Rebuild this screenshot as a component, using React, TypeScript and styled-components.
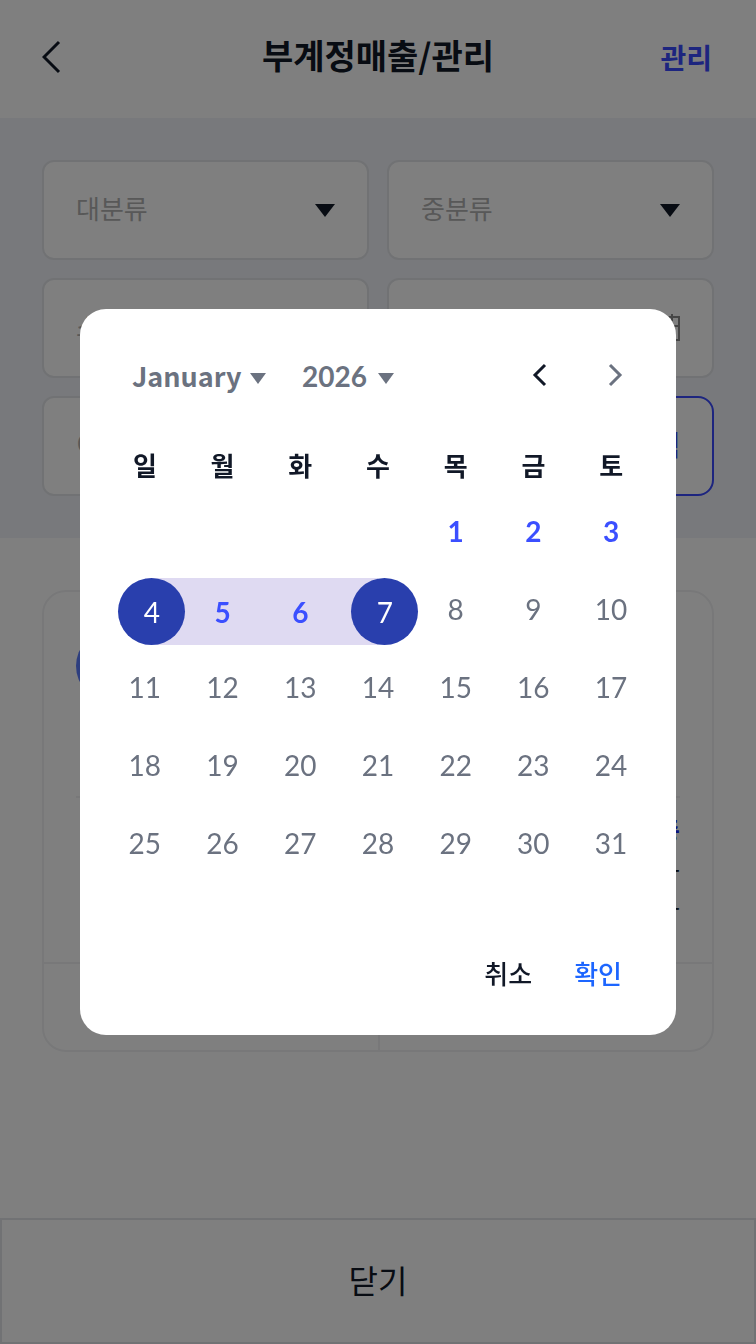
import React from "react";
import styled, { createGlobalStyle, css } from "styled-components";

const GlobalStyle = createGlobalStyle`
  * { box-sizing: border-box; }
  body {
    margin: 0;
    background: #ffffff;
    color: #111827;
    font-family: "Noto Sans CJK KR", sans-serif;
  }
  button, select, input {
    margin: 0;
    padding: 0;
    border: 0;
    background: none;
    color: inherit;
    font: inherit;
    letter-spacing: inherit;
  }
  svg { flex: none; }
`;

const Page = styled.div`
  display: flex;
  flex-direction: column;
  min-height: 100vh;
`;

const Header = styled.header`
  display: grid;
  grid-template-columns: 1fr auto 1fr;
  align-items: center;
  height: 118px;
  padding: 0 42px 4px;
`;

const Title = styled.h1`
  margin: 0;
  padding-bottom: 4px;
  font-size: 34px;
  line-height: 48px;
  font-weight: 700;
`;

const BackButton = styled.button`
  display: flex;
  justify-self: start;
`;

const ManageButton = styled.button`
  justify-self: end;
  padding-right: 2px;
  color: #3b4bff;
  font-size: 28px;
  line-height: 40px;
  font-weight: 700;
`;

const Filters = styled.section`
  display: grid;
  grid-template-columns: repeat(2, minmax(0, 1fr));
  gap: 18px;
  padding: 42px;
  background: #f0f2f8;
`;

const fieldBox = css`
  height: 100px;
  border: 2px solid #e2e4e8;
  border-radius: 12px;
  background: #ffffff;
`;

const SelectField = styled.label`
  ${fieldBox}
  display: flex;
  align-items: center;
  padding: 0 32px;
`;

const Select = styled.select`
  flex: 1;
  min-width: 0;
  padding-bottom: 4px;
  appearance: none;
  color: #b0b0b0;
  font-size: 26px;
  line-height: 40px;
`;

const TextInput = styled.input`
  flex: 1;
  min-width: 0;
  padding-bottom: 4px;
  font-size: 26px;
  line-height: 40px;
  color: #111827;
  &::placeholder { color: #b0b0b0; opacity: 1; }
`;

const SearchButton = styled.button`
  ${fieldBox}
  padding: 0 32px 4px;
  border-color: #3b4bff;
  border-radius: 16px;
  color: #3b4bff;
  font-size: 28px;
  font-weight: 500;
  text-align: right;
`;

const Main = styled.main`
  flex: 1;
  padding: 52px 42px 0;
`;

const Card = styled.article`
  border: 2px solid #f0f1f3;
  border-radius: 24px;
`;

const CardBody = styled.div`
  height: 372px;
  padding: 0 32px;
  border-bottom: 2px solid #f0f1f3;
`;

const CardHead = styled.div`
  display: flex;
  align-items: center;
  height: 206px;
  padding-bottom: 56px;
  border-bottom: 2px solid #f0f1f3;
`;

const Avatar = styled.div`
  width: 72px;
  height: 72px;
  border-radius: 50%;
  background: #5b7cff;
`;

const Amount = styled.div<{ $accent?: boolean }>`
  height: 38px;
  color: ${(p) => (p.$accent ? "#1226ff" : "#111827")};
  font-size: 26px;
  line-height: 38px;
  font-weight: ${(p) => (p.$accent ? 700 : 400)};
  text-align: right;
`;

const Amounts = styled.div`
  padding-top: 12px;
`;

const CardActions = styled.div`
  display: grid;
  grid-template-columns: 1fr 1fr;
  height: 86px;
`;

const CardAction = styled.div`
  & + & { border-left: 2px solid #f0f1f3; }
`;

const CloseButton = styled.button`
  height: 126px;
  padding-bottom: 4px;
  border: 2px solid #e2e4e8;
  font-size: 32px;
  line-height: 48px;
`;

const Overlay = styled.div`
  position: fixed;
  inset: 0;
  display: flex;
  align-items: center;
  justify-content: center;
  padding: 0 80px;
  background: rgba(0, 0, 0, 0.5);
`;

const Dialog = styled.div`
  display: flex;
  flex-direction: column;
  flex: 1;
  max-width: 596px;
  height: 726px;
  padding: 42px 26px 0;
  border-radius: 26px;
  background: #ffffff;
`;

const DialogHead = styled.div`
  display: flex;
  align-items: center;
  height: 50px;
  padding: 0 26px;
  color: #6b7280;
`;

const Picker = styled.label<{ $width: number }>`
  display: flex;
  align-items: center;
  width: ${(p) => p.$width}px;
  margin-right: 36px;

  svg { margin-top: 4px; }
`;

const PickerSelect = styled.select<{ $numeric?: boolean }>`
  flex: 1;
  min-width: 0;
  appearance: none;
  font-family: ${(p) => (p.$numeric ? "Lato" : '"Noto Sans CJK KR"')}, sans-serif;
  font-size: ${(p) => (p.$numeric ? 28 : 27)}px;
  line-height: 40px;
  font-weight: 700;
`;

const Steppers = styled.div`
  display: flex;
  gap: 60px;
  margin-left: auto;
  padding-bottom: 2px;
`;

const StepButton = styled.button<{ $muted?: boolean }>`
  display: flex;
  color: ${(p) => (p.$muted ? "#6b7280" : "#111827")};
`;

const Calendar = styled.table`
  width: 100%;
  margin-top: 33px;
  table-layout: fixed;
  border-collapse: collapse;
`;

const Weekday = styled.th`
  height: 62px;
  padding: 0;
  font-size: 26px;
  line-height: 40px;
  font-weight: 700;
`;

type DayKind = "plain" | "active" | "range" | "start" | "end";

const dayBand = {
  plain: "none",
  active: "none",
  range: "#dfdaf2",
  start: "linear-gradient(to right, transparent 50%, #dfdaf2 50%)",
  end: "linear-gradient(to right, #dfdaf2 50%, transparent 50%)",
};

const isSelected = (kind: DayKind) => kind !== "plain" && kind !== "active";
const isEndpoint = (kind: DayKind) => kind === "start" || kind === "end";

const DayCell = styled.td`
  height: 78px;
  padding: 0;
  vertical-align: top;
`;

const DayBand = styled.div<{ $kind: DayKind }>`
  display: flex;
  justify-content: center;
  height: 67px;
  margin-top: ${(p) => (isSelected(p.$kind) ? 4 : 1)}px;
  padding-left: ${(p) => (isEndpoint(p.$kind) ? 14 : 0)}px;
  background: ${(p) => dayBand[p.$kind]};
`;

const Day = styled.button<{ $kind: DayKind }>`
  flex: none;
  width: 67px;
  height: 67px;
  border-radius: 50%;
  font-family: Lato, sans-serif;
  font-size: 28px;
  color: #6b7280;
  ${(p) =>
    (p.$kind === "active" || p.$kind === "range") &&
    css`
      color: #3b4fff;
      font-weight: 700;
    `}
  ${(p) =>
    isEndpoint(p.$kind) &&
    css`
      color: #ffffff;
      background: #293fad;
    `}
`;

const DialogActions = styled.div`
  display: flex;
  justify-content: flex-end;
  gap: 42px;
  margin-top: auto;
  padding: 0 28px 42px;
`;

const TextButton = styled.button<{ $primary?: boolean }>`
  color: ${(p) => (p.$primary ? "#1d66ff" : "#111827")};
  font-size: 26px;
  line-height: 40px;
  font-weight: 500;
`;

const Triangle = ({ width, height }: { width: number; height: number }) => (
  <svg width={width} height={height} viewBox="0 0 20 13" preserveAspectRatio="none" aria-hidden="true">
    <path d="M0 0H20L10 13Z" fill="currentColor" />
  </svg>
);

const CalendarIcon = () => (
  <svg width="26" height="28" viewBox="0 0 26 28" fill="none" stroke="#8a8a8a" strokeWidth="2" aria-hidden="true">
    <path d="M1 3H25V26H1ZM1 12H25M7 0V7M18 0V7" />
  </svg>
);

const weekdays = ["일", "월", "화", "수", "목", "금", "토"];
const weeks: (number | null)[][] = [
  [null, null, null, null, 1, 2, 3],
  [4, 5, 6, 7, 8, 9, 10],
  [11, 12, 13, 14, 15, 16, 17],
  [18, 19, 20, 21, 22, 23, 24],
  [25, 26, 27, 28, 29, 30, 31],
];

const kindOf = (day: number): DayKind => {
  if (day < 4) return "active";
  if (day === 4) return "start";
  if (day < 7) return "range";
  if (day === 7) return "end";
  return "plain";
};

export default function App() {
  return (
    <>
      <GlobalStyle />
      <Page>
        <Header>
          <BackButton aria-label="뒤로">
            <svg width="20" height="34" viewBox="0 0 20 34" fill="none" aria-hidden="true">
              <path d="M17 2L2 17L17 32" stroke="#111827" strokeWidth="3" />
            </svg>
          </BackButton>
          <Title>부계정매출/관리</Title>
          <ManageButton>관리</ManageButton>
        </Header>
        <Filters>
          <SelectField>
            <Select aria-label="대분류"><option>대분류</option></Select>
            <Triangle width={20} height={13} />
          </SelectField>
          <SelectField>
            <Select aria-label="중분류"><option>중분류</option></Select>
            <Triangle width={20} height={13} />
          </SelectField>
          <SelectField>
            <Select aria-label="소분류"><option>소분류</option></Select>
          </SelectField>
          <SelectField>
            <TextInput aria-label="기간" />
            <CalendarIcon />
          </SelectField>
          <SelectField>
            <TextInput aria-label="이름" placeholder="이름" />
          </SelectField>
          <SearchButton>검색</SearchButton>
        </Filters>
        <Main>
          <Card>
            <CardBody>
              <CardHead><Avatar /></CardHead>
              <Amounts>
                <Amount $accent>총</Amount>
                <Amount>-</Amount>
                <Amount>-</Amount>
              </Amounts>
            </CardBody>
            <CardActions>
              <CardAction />
              <CardAction />
            </CardActions>
          </Card>
        </Main>
        <CloseButton>닫기</CloseButton>
      </Page>
      <Overlay>
        <Dialog role="dialog" aria-modal="true" aria-label="January 2026">
          <DialogHead>
            <Picker $width={134}>
              <PickerSelect aria-label="월"><option>January</option></PickerSelect>
              <Triangle width={16} height={11} />
            </Picker>
            <Picker $width={92}>
              <PickerSelect $numeric aria-label="년"><option>2026</option></PickerSelect>
              <Triangle width={16} height={11} />
            </Picker>
            <Steppers>
              <StepButton aria-label="이전 달">
                <svg width="16" height="24" viewBox="0 0 16 24" fill="none" aria-hidden="true">
                  <path d="M13 2L3 12L13 22" stroke="currentColor" strokeWidth="3" />
                </svg>
              </StepButton>
              <StepButton $muted aria-label="다음 달">
                <svg width="16" height="24" viewBox="0 0 16 24" fill="none" aria-hidden="true">
                  <path d="M2 2L12 12L2 22" stroke="currentColor" strokeWidth="3" />
                </svg>
              </StepButton>
            </Steppers>
          </DialogHead>
          <Calendar>
            <thead>
              <tr>{weekdays.map((name) => <Weekday key={name}>{name}</Weekday>)}</tr>
            </thead>
            <tbody>
              {weeks.map((week, row) => (
                <tr key={row}>
                  {week.map((day, column) => (
                    <DayCell key={column}>
                      {day !== null && (
                        <DayBand $kind={kindOf(day)}>
                          <Day $kind={kindOf(day)}>{day}</Day>
                        </DayBand>
                      )}
                    </DayCell>
                  ))}
                </tr>
              ))}
            </tbody>
          </Calendar>
          <DialogActions>
            <TextButton>취소</TextButton>
            <TextButton $primary>확인</TextButton>
          </DialogActions>
        </Dialog>
      </Overlay>
    </>
  );
}
